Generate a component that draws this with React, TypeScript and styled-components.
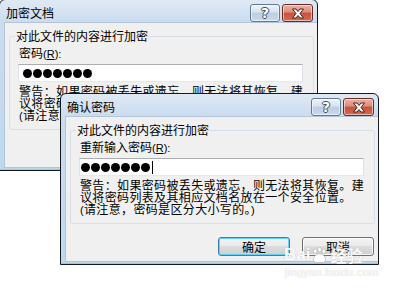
import React from "react";
import styled, { createGlobalStyle } from "styled-components";

const GlobalStyle = createGlobalStyle`
    html, body {
        margin: 0;
        padding: 0;
        background: #fff;
    }
    body {
        font-family: "Noto Sans CJK SC", "DejaVu Sans", sans-serif;
        font-size: 12px;
        color: #000;
    }
`;

const Desktop = styled.div`
    position: relative;
    width: 401px;
    height: 291px;
    overflow: hidden;
    background: #fff;
`;

const Window = styled.div<{ $x: number; $y: number }>`
    position: absolute;
    left: ${p => p.$x}px;
    top: ${p => p.$y}px;
    width: 319px;
    height: 172px;
    box-sizing: border-box;
    border: 1px solid #151a20;
    border-radius: 6px 6px 0 0;
    background: linear-gradient(to bottom, #dfe9f5 0, #cbdcef 22px, #c6d9ed 60%, #bbdaef 100%);
    box-shadow: inset 0 -1px 0 #8ccdec;
    display: flex;
    flex-direction: column;
    overflow: hidden;
`;

const TitleBar = styled.div`
    height: 23px;
    box-sizing: border-box;
    padding: 4px 4px 0 6px;
    display: flex;
    align-items: flex-start;
`;

const Title = styled.div`
    flex: 1;
    font-size: 12px;
    line-height: 18px;
    color: #000;
`;

const CaptionButtons = styled.div`
    display: flex;
    gap: 2px;
`;

const CaptionButton = styled.div<{ $close?: boolean }>`
    width: ${p => (p.$close ? 31 : 30)}px;
    height: 18px;
    box-sizing: border-box;
    border: 1px solid ${p => (p.$close ? "#6b2a22" : "#66788f")};
    border-radius: 3px;
    background: ${p =>
        p.$close
            ? "linear-gradient(to bottom, #eab2a6 0, #dc8b7a 45%, #c8523f 50%, #cf6a4f 100%)"
            : "linear-gradient(to bottom, #eef3f9 0, #d7e3f0 45%, #bccde2 50%, #cad9ea 100%)"};
    box-shadow: inset 0 0 0 1px rgba(255, 255, 255, 0.55);
    display: flex;
    align-items: center;
    justify-content: center;
`;

const HelpGlyph = styled.span`
    font-family: "DejaVu Sans", sans-serif;
    font-weight: bold;
    font-size: 14px;
    line-height: 14px;
    color: #fff;
    text-shadow: -1px 0 #3b4c63, 1px 0 #3b4c63, 0 -1px #3b4c63, 0 1px #3b4c63;
`;

const Frame = styled.div`
    flex: 1;
    display: flex;
    padding: 0 4px 3px 5px;
`;

const Client = styled.div`
    flex: 1;
    background: #f0f0f0;
    box-shadow: 0 0 0 1px #b2c4da;
    display: flex;
    flex-direction: column;
    padding: 0 4px;
`;

const GroupBox = styled.fieldset`
    margin: 6px 0 0 0;
    padding: 0 10px 7px 8px;
    border: 1px solid #d5dfe5;
    border-radius: 3px;
    min-width: 0;
`;

const GroupLabel = styled.legend`
    margin-left: -3px;
    padding: 0 1px;
    font-size: 12px;
    line-height: 14px;
`;

const FieldLabel = styled.div`
    margin-top: 3px;
    padding-left: 1px;
    font-size: 12px;
    line-height: 14px;
    white-space: nowrap;
`;

const Half = styled.span`
    font-family: "Liberation Sans", sans-serif;
    font-size: 11px;
`;

const Underlined = styled.span`
    text-decoration: underline;
`;

const TextBox = styled.div<{ $pad: number }>`
    margin-top: 3px;
    height: 18px;
    box-sizing: border-box;
    border: 1px solid;
    border-color: #abadb3 #dbdfe6 #e3e9ef #e2e3ea;
    background: #fff;
    display: flex;
    align-items: center;
    padding-left: ${p => p.$pad}px;
`;

const Dot = styled.span`
    width: 9px;
    height: 9px;
    border-radius: 50%;
    background: #000;
    margin-right: 1px;
    flex: none;
`;

const Caret = styled.span`
    width: 1px;
    height: 13px;
    background: #000;
    margin-left: 1px;
`;

const Warning = styled.div`
    margin-top: 3px;
    padding-left: 1px;
    font-size: 12px;
    line-height: 12px;
    letter-spacing: 0.35px;
    white-space: nowrap;
`;

const ButtonRow = styled.div`
    display: flex;
    justify-content: flex-end;
    gap: 12px;
    margin-top: 13px;
    padding-right: 1px;
`;

const PushButton = styled.div<{ $default?: boolean }>`
    width: 72px;
    height: 19px;
    box-sizing: border-box;
    border: 1px solid ${p => (p.$default ? "#3c7fb1" : "#707070")};
    border-radius: 3px;
    background: linear-gradient(to bottom, #f2f2f2 0, #ebebeb 50%, #dddddd 50%, #cfcfcf 100%);
    box-shadow: inset 0 0 0 1px ${p => (p.$default ? "#5fd2f5" : "rgba(255,255,255,0.8)")};
    font-size: 12px;
    line-height: 17px;
    text-align: center;
`;

const Watermark = styled.div`
    position: absolute;
    left: 284px;
    top: 246px;
    display: flex;
    flex-direction: column;
    align-items: flex-start;
    color: rgba(255, 255, 255, 0.95);
    text-shadow: 0 0 1px rgba(150, 150, 150, 0.6);
    pointer-events: none;
`;

const MarkRow = styled.div`
    display: flex;
    align-items: center;
    font-family: "Liberation Sans", "Noto Sans CJK SC", sans-serif;
    font-weight: bold;
    font-size: 17px;
    line-height: 18px;
`;

const MarkCjk = styled.span`
    font-family: "Noto Sans CJK SC", sans-serif;
    font-size: 16px;
    margin-left: 1px;
`;

const MarkUrl = styled.div`
    margin-top: 2px;
    margin-left: 1px;
    font-family: "Liberation Sans", sans-serif;
    font-size: 11px;
    line-height: 12px;
    letter-spacing: 0.3px;
`;

const CloseIcon = () => (
    <svg width="14" height="11" viewBox="0 0 14 11">
        <path
            d="M1.5 1 H5 L7 3.5 L9 1 H12.5 L9 5.5 L12.5 10 H9 L7 7.5 L5 10 H1.5 L5 5.5 Z"
            fill="#fff"
            stroke="#43221c"
            strokeWidth="1"
            strokeLinejoin="round"
        />
    </svg>
);

const Paw = () => (
    <svg width="17" height="17" viewBox="0 0 20 20" style={{ margin: "0 1px" }}>
        <g fill="rgba(255,255,255,0.95)" stroke="rgba(150,150,150,0.6)" strokeWidth="0.9">
            <ellipse cx="5" cy="5" rx="2.2" ry="2.8" />
            <ellipse cx="10" cy="3" rx="2.2" ry="2.8" />
            <ellipse cx="15" cy="5" rx="2.2" ry="2.8" />
            <path d="M3 15 C3 10 7 8 10 8 C13 8 17 10 17 15 C17 18 14 19 10 18 C6 19 3 18 3 15 Z" />
        </g>
    </svg>
);

interface IDialogProps {
    x: number;
    y: number;
    title: string;
    label: string;
    dotPad: number;
    caret?: boolean;
}

const PasswordDialog: React.FC<IDialogProps> = ({ x, y, title, label, dotPad, caret }) => {
    const dots = Array.from({ length: 7 });

    return (
        <Window $x={x} $y={y}>
            <TitleBar>
                <Title>{title}</Title>
                <CaptionButtons>
                    <CaptionButton>
                        <HelpGlyph>?</HelpGlyph>
                    </CaptionButton>
                    <CaptionButton $close>
                        <CloseIcon />
                    </CaptionButton>
                </CaptionButtons>
            </TitleBar>
            <Frame>
                <Client>
                    <GroupBox>
                        <GroupLabel>对此文件的内容进行加密</GroupLabel>
                        <FieldLabel>
                            {label}
                            <Half>
                                (<Underlined>R</Underlined>):
                            </Half>
                        </FieldLabel>
                        <TextBox $pad={dotPad}>
                            {dots.map((_, i) => (
                                <Dot key={i} />
                            ))}
                            {caret && <Caret />}
                        </TextBox>
                        <Warning>
                            警告：如果密码被丢失或遗忘，则无法将其恢复。建
                            <br />
                            议将密码列表及其相应文档名放在一个安全位置。
                            <br />
                            <Half>(</Half>请注意，密码是区分大小写的。<Half>)</Half>
                        </Warning>
                    </GroupBox>
                    <ButtonRow>
                        <PushButton $default>确定</PushButton>
                        <PushButton>取消</PushButton>
                    </ButtonRow>
                </Client>
            </Frame>
        </Window>
    );
};

const App: React.FC = () => {
    return (
        <Desktop>
            <GlobalStyle />
            <PasswordDialog x={-1} y={-1} title="加密文档" label="密码" dotPad={4} />
            <PasswordDialog x={60} y={93} title="确认密码" label="重新输入密码" dotPad={1} caret />
            <Watermark>
                <MarkRow>
                    Bai
                    <Paw />
                    <MarkCjk>经验</MarkCjk>
                </MarkRow>
                <MarkUrl>jingyan.baidu.com</MarkUrl>
            </Watermark>
        </Desktop>
    );
};

export default App;
